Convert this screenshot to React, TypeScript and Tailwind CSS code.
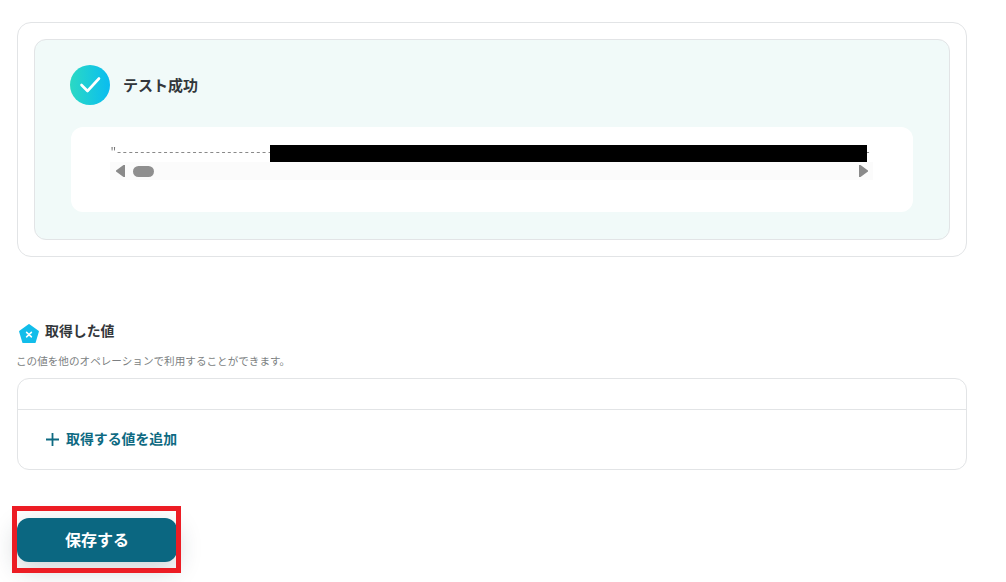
export default function App() {
  const font = { fontFamily: '"Noto Sans CJK JP", "Noto Sans", sans-serif' };
  return (
    <div style={font} className="relative w-[1006px] h-[582px] overflow-hidden bg-white pl-[17px] pt-[22px]">
      <div className="w-[950px] h-[235px] rounded-[14px] border border-[#e2e4e6] bg-white p-4">
        <div className="h-[201px] rounded-[12px] border border-[#e2e4e6] bg-[#f1faf9] pl-[36px] pr-[36px] pt-[25px]">
          <div className="flex items-center gap-[13px] -ml-px h-10">
            <div className="w-10 h-10 rounded-full bg-gradient-to-r from-[#2bd9c3] to-[#0abcf0] flex items-center justify-center">
              <svg width="24" height="20" viewBox="0 0 24 20" fill="none">
                <path d="M3.5 10 L9.5 16 L21 3.5" stroke="#fff" strokeWidth="2.6" strokeLinecap="round" strokeLinejoin="round" />
              </svg>
            </div>
            <span className="text-[15px] font-bold text-[#33373b] leading-none pb-[2px]">テスト成功</span>
          </div>
          <div className="mt-[22px] h-[85px] w-[842px] rounded-[12px] bg-white pl-[39px] pt-[18px] relative">
            <div className="w-[763px] whitespace-nowrap text-[11px] leading-[15px] text-[#777] h-[17px] tracking-[-0.8px] [will-change:transform]" style={{ fontFamily: '"Liberation Mono", monospace' }}>
              {'"' + "-".repeat(130)}
            </div>
            <div className="w-[763px] h-[18px] bg-[#fbfbfb] flex items-center justify-between pl-[6px] pr-[5px]">
              <div className="flex items-center gap-[8px]">
                <svg width="9" height="12" viewBox="0 0 9 12"><path d="M9 0 V12 H7.5 L0 6.5 V5.5 L7.5 0 Z" fill="#8a8a8a" /></svg>
                <div className="w-[21px] h-[11px] rounded-full bg-[#8f8f8f]" />
              </div>
              <svg width="9" height="12" viewBox="0 0 9 12"><path d="M0 0 V12 H1.5 L9 6.5 V5.5 L1.5 0 Z" fill="#8a8a8a" /></svg>
            </div>
            <div className="absolute left-[199px] top-[18px] w-[597px] h-[17px] bg-black" />
          </div>
        </div>
      </div>

      <div className="mt-[65px] flex items-center h-[21px] pl-[2px] gap-[6px]">
        <svg width="20" height="20" viewBox="0 0 20 20" className="self-start mt-[2px]">
          <path d="M10 1 L19 7.4 L15.8 18.2 H4.2 L1 7.4 Z" fill="#12bdea" stroke="#12bdea" strokeWidth="1.8" strokeLinejoin="round" />
          <path d="M7.6 8.4 L12.4 12.8 M12.4 8.4 L7.6 12.8" stroke="#fff" strokeWidth="1.6" strokeLinecap="round" />
        </svg>
        <span className="text-[13.9px] font-bold text-[#33373b] leading-none pb-[4px]">取得した値</span>
      </div>
      <p className="-ml-px mt-[10px] text-[10.6px] leading-[16px] text-[#7c7f82]">この値を他のオペレーションで利用することができます。</p>
      <div className="mt-[9px] w-[950px] h-[92px] rounded-[12px] border border-[#e2e4e6] bg-white">
        <div className="h-[31px] border-b border-[#e2e4e6]" />
        <div className="h-[59px] flex items-center pl-[27px] gap-[6px] text-[#0e6a82]">
          <svg width="15" height="15" viewBox="0 0 15 15">
            <path d="M7.5 1 V14 M1 7.5 H14" stroke="#0e6a82" strokeWidth="1.8" />
          </svg>
          <span className="text-[13.9px] font-bold leading-none pb-[1px]">取得する値を追加</span>
        </div>
      </div>

      <button className="mt-[48px] block w-[160px] h-[44px] rounded-[12px] bg-[#0b6781] text-white text-[16px] font-bold pb-[2px] shadow-[0_8px_24px_rgba(30,50,70,0.22)]">保存する</button>
      <div className="absolute left-[12px] top-[506px] w-[169px] h-[67px] border-[5px] border-[#ec1c24]" />
    </div>
  );
}
